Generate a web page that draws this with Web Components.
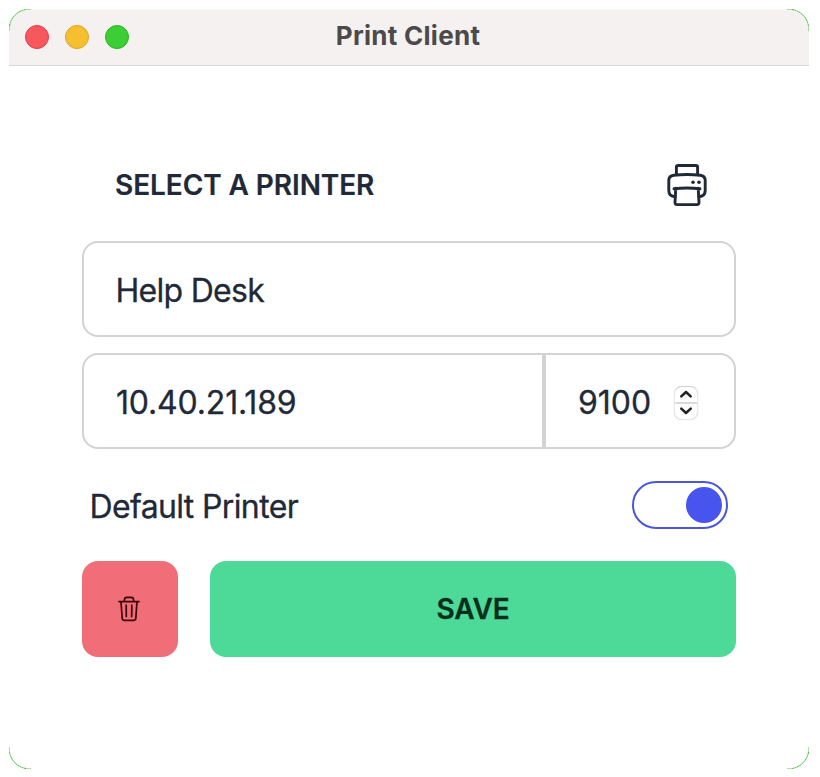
<!DOCTYPE html>
<html lang="en"><head><meta charset="utf-8"><title>Print Client</title>
<style>html,body{margin:0;background:#fff;height:777px;overflow:hidden}</style></head>
<body>
<app-window heading="Print Client">
  <printer-form></printer-form>
</app-window>
<script>
const define=(name,html,init)=>{
  const t=document.createElement('template');t.innerHTML=html;
  customElements.define(name,class extends HTMLElement{
    constructor(){super();this.attachShadow({mode:'open'}).append(t.content.cloneNode(true));}
    connectedCallback(){if(init)init(this,this.shadowRoot);}
  });
};
define('traffic-lights',`<style>
:host{display:flex;gap:16px;margin-top:-2px}
i{box-sizing:border-box;width:24px;height:24px;border-radius:50%;background:#f9575e;border:1px solid #e53c49}
i:nth-of-type(2){background:#f6bf2f;border-color:#dda526}
i:nth-of-type(3){background:#3bcf35;border-color:#2bb321}
</style><i></i><i></i><i></i>`);
define('title-bar',`<style>
:host{box-sizing:border-box;display:grid;grid-template-columns:1fr auto 1fr;align-items:center;height:57px;padding:0 16px;background:#f5f1f0;border-bottom:1px solid #d9d7d8;border-radius:22px 22px 0 0;border-top:1px solid #f9f7f7}
span{font:700 26px/32px Inter,sans-serif;color:#4b494a;letter-spacing:.28px;margin-top:-3px;margin-right:2px}
</style><traffic-lights></traffic-lights><span><slot></slot></span>`);
define('window-corners',`<style>
:host{position:absolute;inset:0;pointer-events:none}
svg{display:block;width:100%;height:100%}
path{fill:none;stroke:#2fb326;stroke-width:1}
.bend{stroke-dasharray:2 .5}
.end{opacity:.4}
</style><svg viewBox="0 0 800 760">
<path class="bend" d="M.5 17A20 20 0 0 1 17 .5M783 .5A20 20 0 0 1 799.5 17M799.5 743A20 20 0 0 1 783 759.5M17 759.5A20 20 0 0 1 .5 743"/>
<path class="end" d="M.5 17v5M17 .5h5M783 .5h-5M799.5 17v5M799.5 743v-5M783 759.5h-5M17 759.5h5M.5 743v-5"/></svg>`);
define('app-window',`<style>
:host{display:block;position:relative;box-sizing:border-box;width:800px;height:760px;margin:9px;border-radius:22px;background:#fff}
</style><title-bar></title-bar><slot></slot><window-corners></window-corners>`,
(h,r)=>{r.querySelector('title-bar').textContent=h.getAttribute('heading');});
define('printer-icon',`<style>:host{display:block;width:40px;height:44px}svg{display:block}</style>
<svg width="40" height="44" viewBox="0 0 40 44" fill="none" stroke="#1f2937" stroke-width="2.9" stroke-linecap="round" stroke-linejoin="round">
<path d="M9.4 11V4.3q0-1.8 1.8-1.8h17.6q1.8 0 1.8 1.8V11"/>
<path d="M8.2 33.8Q1.8 33.4 1.8 27.6V17.5q0-4.7 4.9-5.3 13.3-1.4 26.6 0 4.9.6 4.9 5.3V27.6q0 5.8-6.4 6.2"/>
<path d="M8.8 25.2L8 39.4q-.1 2.2 2 2.2h20q2.1 0 2-2.2l-.8-14.2M7 25.8q13-1.7 26 0"/>
<g fill="#1f2937" stroke="none"><circle cx="26" cy="19.2" r="1.8"/><circle cx="32" cy="19.2" r="1.8"/></g></svg>`);
define('trash-icon',`<style>:host{display:block;margin-right:2px}svg{display:block}</style>
<svg width="22" height="26" viewBox="0 0 22 26" fill="none" stroke="#3a0308" stroke-width="1.7" stroke-linecap="round" stroke-linejoin="round">
<path d="M1 5.6h20M3 5.8l1.2 16.5q.1 2 2.1 2h9.4q2 0 2.1-2L19 5.8M6.4 5.3V4q0-2.6 2.6-2.6h4q2.6 0 2.6 2.6v1.3M8.2 9.2l.1 11.3M13.8 9.2l-.1 11.3"/></svg>`);
define('number-stepper',`<style>
:host{display:grid;grid-template-rows:15.5px 14.5px;gap:2px;width:22px;border-radius:8px;border:1px solid #e8e8e8;border-top-color:#d5d5d5;background:#dadada;overflow:hidden;box-shadow:0 0 1px #ccc}
span{background:#fff;display:grid;place-items:center}
</style>
<span><svg width="14" height="10" viewBox="0 0 14 10" fill="none" stroke="#242424" stroke-width="2.6" stroke-linecap="round" stroke-linejoin="round"><path d="M2.3 7.4L7 3l4.7 4.4"/></svg></span>
<span><svg width="14" height="10" viewBox="0 0 14 10" fill="none" stroke="#242424" stroke-width="2.6" stroke-linecap="round" stroke-linejoin="round"><path d="M2.3 2.6L7 7l4.7-4.4"/></svg></span>`);
define('text-field',`<style>
:host{box-sizing:border-box;display:flex;align-items:center;height:96px;padding:3px 32px 0;border:2px solid #d2d3d7;border-radius:16px;font:400 32px/40px Inter,sans-serif;color:#1f2937;background:#fff}
:host([join=left]){border-radius:16px 0 0 16px}
:host([join=right]){border-radius:0 16px 16px 0}
</style><slot></slot>`);
define('toggle-switch',`<style>
:host{box-sizing:border-box;display:flex;justify-content:flex-end;align-items:center;width:96px;height:48px;padding:0 4px;border:2px solid #4b55df;border-radius:24px}
i{width:36px;height:36px;border-radius:50%;background:#4755ee}
</style><i></i>`);
define('action-button',`<style>
:host{display:grid;place-items:center;height:96px;border-radius:16px;font:600 28px/36px Inter,sans-serif}
:host([kind=danger]){background:#f16d77}
:host([kind=success]){background:#4dda99;color:#062f1b}
</style><slot></slot>`);
define('printer-form',`<style>
:host{display:flex;flex-direction:column;padding:97px 73px 0;font-family:Inter,sans-serif;color:#1f2937}
header{display:flex;justify-content:space-between;align-items:center;height:44px;padding:0 29px 0 33px;margin-bottom:34px}
h1{margin:0;font:600 28px/36px Inter,sans-serif;letter-spacing:-.08px;-webkit-text-stroke:.2px}
.row{display:grid;grid-template-columns:462px 1fr;margin:16px 0 32px}
.gap{display:flex;width:100%;justify-content:space-between;align-items:center}
number-stepper{margin-right:4px}
.default{display:flex;justify-content:space-between;align-items:center;padding:0 8px;font-size:32px;line-height:40px;margin-bottom:32px;height:48px}
.actions{display:grid;grid-template-columns:96px 1fr;gap:32px}
.n,.i,.p,.d,.s{white-space:nowrap;-webkit-text-stroke:.3px}
.n{letter-spacing:-.72px;margin-left:-.5px}
.i{letter-spacing:-.17px}
.d{letter-spacing:-.64px;margin:3px 0 0 -.5px}
.s{letter-spacing:-.15px}
</style>
<header><h1>SELECT A PRINTER</h1><printer-icon></printer-icon></header>
<text-field><span class="n">Help Desk</span></text-field>
<div class="row"><text-field join="left"><span class="i">10.40.21.189</span></text-field>
<text-field join="right"><div class="gap"><span class="p">9100</span><number-stepper></number-stepper></div></text-field></div>
<div class="default"><span class="d">Default Printer</span><toggle-switch></toggle-switch></div>
<div class="actions"><action-button kind="danger"><trash-icon></trash-icon></action-button><action-button kind="success"><span class="s">SAVE</span></action-button></div>`);
</script></body></html>
